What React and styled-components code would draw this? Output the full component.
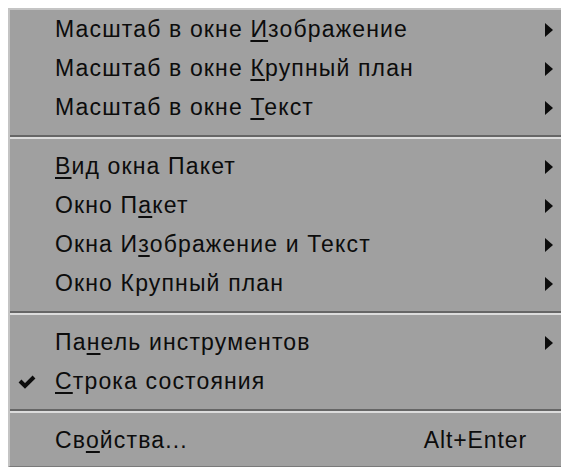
import React from "react";
import styled, { createGlobalStyle } from "styled-components";

const GlobalStyle = createGlobalStyle`
  html, body {
    margin: 0;
    padding: 0;
    background: #ffffff;
    overflow: hidden;
  }
  body {
    padding: 8px 0 0 8px;
  }
`;

const Menu = styled.div`
  width: 560px;
  display: flex;
  flex-direction: column;
  background: #a0a0a0;
  border-top: 2px solid #c4c4c4;
  border-left: 2px solid #c4c4c4;
  border-bottom: 1px solid #7a7a7a;
  padding-bottom: 6px;
  font-family: "Liberation Sans", Arial, sans-serif;
  font-size: 23px;
  color: #0c0c0c;
  box-sizing: border-box;
`;

const Row = styled.div`
  height: 39px;
  display: flex;
  align-items: center;
  padding-left: 45px;
  padding-right: 15px;
`;

const CheckCell = styled.div`
  width: 45px;
  margin-left: -45px;
  display: flex;
  justify-content: flex-start;
  padding-left: 8px;
  box-sizing: border-box;
`;

const Label = styled.span`
  flex: 1;
  white-space: nowrap;
  letter-spacing: 1.15px;
`;

const Key = styled.span`
  text-decoration: underline;
  text-underline-offset: 3px;
  text-decoration-thickness: 2px;
`;

const Shortcut = styled.span`
  margin-right: 26px;
  letter-spacing: 0.9px;
`;

const Arrow = styled.div`
  width: 0;
  height: 0;
  border-top: 7px solid transparent;
  border-bottom: 7px solid transparent;
  border-left: 8px solid #0c0c0c;
`;

const Separator = styled.div`
  height: 20px;
  display: flex;
  flex-direction: column;
  justify-content: center;

  &::before {
    content: "";
    height: 2px;
    background: #666666;
  }
  &::after {
    content: "";
    height: 2px;
    background: #dcdcdc;
  }
`;

const Check = () => (
  <svg width="18" height="14" viewBox="0 0 18 14">
    <polyline
      points="2,6 7,11 16,2"
      fill="none"
      stroke="#0c0c0c"
      strokeWidth="4"
    />
  </svg>
);

function Item({ before, mark, after, submenu, checked, shortcut }) {
  return (
    <Row>
      <CheckCell>{checked && <Check />}</CheckCell>
      <Label>
        {before}
        {mark && <Key>{mark}</Key>}
        {after}
      </Label>
      {shortcut && <Shortcut>{shortcut}</Shortcut>}
      {submenu && <Arrow />}
    </Row>
  );
}

export default function App() {
  return (
    <>
      <GlobalStyle />
      <Menu>
        <Item before="Масштаб в окне " mark="И" after="зображение" submenu />
        <Item before="Масштаб в окне " mark="К" after="рупный план" submenu />
        <Item before="Масштаб в окне " mark="Т" after="екст" submenu />
        <Separator />
        <Item mark="В" after="ид окна Пакет" submenu />
        <Item before="Окно П" mark="а" after="кет" submenu />
        <Item before="Окна И" mark="з" after="ображение и Текст" submenu />
        <Item before="Окно Крупный план" submenu />
        <Separator />
        <Item before="Па" mark="н" after="ель инструментов" submenu />
        <Item mark="С" after="трока состояния" checked />
        <Separator />
        <Item before="Св" mark="о" after="йства..." shortcut="Alt+Enter" />
      </Menu>
    </>
  );
}
